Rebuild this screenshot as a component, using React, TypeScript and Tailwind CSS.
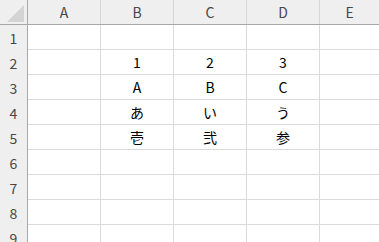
import React from "react";

const cols = ["A", "B", "C", "D", "E"];
const data: Record<number, string[]> = {
  2: ["", "1", "2", "3", ""],
  3: ["", "A", "B", "C", ""],
  4: ["", "あ", "い", "う", ""],
  5: ["", "壱", "弐", "参", ""],
};

export default function App() {
  const rows = [1, 2, 3, 4, 5, 6, 7, 8, 9];
  return (
    <div
      className="w-[379px] h-[242px] overflow-hidden bg-white text-[14px] leading-none"
      style={{ fontFamily: '"Noto Sans CJK JP", "Noto Sans", sans-serif' }}
    >
      <div className="flex h-[25px] bg-[#efefef] border-b border-[#a8a8a8]">
        <div className="w-[28px] shrink-0 border-r border-[#a8a8a8] relative">
          <div
            className="absolute right-[3px] bottom-[2px] w-[17px] h-[17px] bg-[#d4d4d4]"
            style={{ clipPath: "polygon(100% 0, 100% 100%, 0 100%)" }}
          />
        </div>
        {cols.map((c, i) => (
          <div
            key={c}
            className={`${i < 4 ? "w-[73px] shrink-0 border-r border-[#d6d6d6]" : "flex-1"} flex items-center justify-center text-[#474747]`}
          >
            {c}
          </div>
        ))}
      </div>
      {rows.map((r) => (
        <div key={r} className="flex h-[25px]">
          <div className="w-[28px] shrink-0 bg-[#efefef] border-r border-[#a8a8a8] flex items-center justify-center text-[#474747]">
            {r}
          </div>
          {cols.map((c, i) => (
            <div
              key={c}
              className={`${i < 4 ? "w-[73px] shrink-0 border-r" : "flex-1"} border-b border-[#dadada] flex items-center justify-center text-black`}
            >
              {data[r]?.[i] ?? ""}
            </div>
          ))}
        </div>
      ))}
    </div>
  );
}
